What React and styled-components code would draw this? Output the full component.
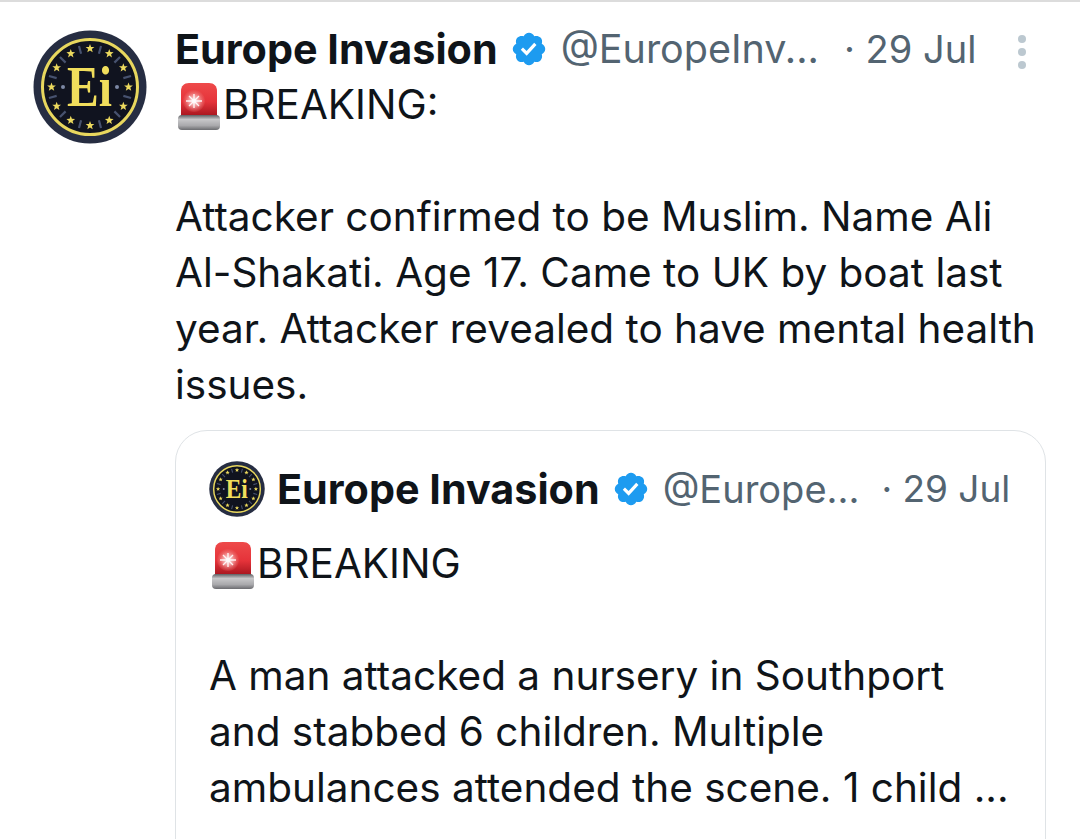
import React from "react";
import styled, { createGlobalStyle } from "styled-components";

const Global = createGlobalStyle`
  html, body { margin: 0; padding: 0; background: #fff; }
  body { font-family: "Inter", "Roboto", "Liberation Sans", sans-serif; color: #0f1419; }
`;

const Page = styled.div`
  width: 1080px;
  height: 839px;
  overflow: hidden;
  box-sizing: border-box;
  border-top: 2px solid #dcdcdc;
  background: #fff;
  display: flex;
  padding: 28px 34px 0 33px;
  gap: 28px;
`;

const AvatarColumn = styled.div`
  flex: none;
  width: 114px;
`;

const Main = styled.div`
  flex: 1;
  min-width: 0;
`;

const HeaderRow = styled.div`
  display: flex;
  align-items: center;
  height: 40px;
  margin-top: -1px;
  white-space: nowrap;
`;

const Name = styled.span`
  font-weight: 700;
  font-size: 41.3px;
  line-height: 40px;
  color: #0f1419;
`;

const BadgeIcon = styled.svg`
  flex: none;
  width: 38px;
  height: 38px;
  margin-left: 12px;
  margin-right: 13px;
  fill: #1d9bf0;
`;

const Muted = styled.span`
  font-size: ${(p) => p.$size || 38}px;
  line-height: 40px;
  color: #536471;
  margin-left: ${(p) => p.$gap || 0}px;
`;

const MoreDots = styled.div`
  display: flex;
  flex-direction: column;
  gap: 5px;
  margin-left: 42px;
  margin-top: 6px;
`;

const Dot = styled.i`
  display: block;
  width: 8px;
  height: 8px;
  border-radius: 50%;
  background: #bcc8d0;
`;

const Body = styled.div`
  font-size: 40.5px;
  line-height: 56px;
  color: #0f1419;
  white-space: nowrap;
  margin-top: ${(p) => p.$top || 0}px;
`;

const Line = styled.div`
  height: 56px;
  display: flex;
  align-items: center;
`;

const QuoteCard = styled.div`
  margin-top: 17px;
  border: 1.5px solid #dfe3e6;
  border-radius: 32px;
  padding: 38px 33px 60px;
  box-sizing: border-box;
`;

const QuoteHeader = styled(HeaderRow)`
  margin-top: 0;
`;

const SmallAvatar = styled.div`
  flex: none;
  margin-right: 12px;
  display: flex;
`;

const star = (cx, cy, r) => {
  let d = "";
  for (let i = 0; i < 10; i++) {
    const a = (Math.PI / 5) * i - Math.PI / 2;
    const rr = i % 2 ? r * 0.42 : r;
    d += `${i ? "L" : "M"}${(cx + rr * Math.cos(a)).toFixed(2)} ${(cy + rr * Math.sin(a)).toFixed(2)}`;
  }
  return d + "Z";
};

const Avatar = ({ size }) => {
  const stars = Array.from({ length: 12 }, (_, i) => {
    const a = (Math.PI / 6) * i;
    return star(57 + 38.5 * Math.sin(a), 57 - 38.5 * Math.cos(a), 4.6);
  });
  const ticks = Array.from({ length: 12 }, (_, i) => {
    const a = (Math.PI / 6) * i + Math.PI / 12;
    const x = 57 + 38.5 * Math.sin(a);
    const y = 57 - 38.5 * Math.cos(a);
    return [x, y, ((i * 30 + 15 + 90) % 180).toString()];
  });
  return (
    <svg width={size} height={size} viewBox="0 0 114 114">
      <circle cx="57" cy="57" r="56.5" fill="#262d42" />
      <circle cx="57" cy="57" r="47.5" fill="#10131f" stroke="#e8d75e" strokeWidth="3" />
      {ticks.map(([x, y, r], i) => (
        <rect key={i} x={x - 4} y={y - 1.1} width="8" height="2.2" fill="#47526f" transform={`rotate(${r} ${x} ${y})`} />
      ))}
      {stars.map((d, i) => (
        <path key={i} d={d} fill="#ecd95e" />
      ))}
      <circle cx="30" cy="57" r="2" fill="#7c88a5" />
      <circle cx="84" cy="57" r="2" fill="#7c88a5" />
      <text
        x="34"
        y="76"
        textLength="45"
        lengthAdjust="spacingAndGlyphs"
        fontFamily="'Liberation Serif', serif"
        fontWeight="700"
        fontSize="57"
        fill="#f1de5c"
      >
        Ei
      </text>
    </svg>
  );
};

const Badge = () => (
  <BadgeIcon viewBox="0 0 24 24">
    <path d="M22.25 12c0-1.43-.88-2.67-2.19-3.34.46-1.39.2-2.9-.81-3.91s-2.52-1.27-3.91-.81c-.66-1.31-1.91-2.19-3.34-2.19s-2.67.88-3.33 2.19c-1.4-.46-2.91-.2-3.92.81s-1.26 2.52-.8 3.91c-1.31.67-2.2 1.91-2.2 3.34s.89 2.67 2.2 3.34c-.46 1.39-.21 2.9.8 3.91s2.52 1.26 3.91.81c.67 1.31 1.91 2.19 3.34 2.19s2.68-.88 3.34-2.19c1.39.45 2.9.2 3.91-.81s1.27-2.52.81-3.91c1.31-.67 2.19-1.91 2.19-3.34zm-11.71 4.2L6.8 12.46l1.41-1.42 2.26 2.26 4.8-5.23 1.47 1.36-6.2 6.77z" />
  </BadgeIcon>
);

const SirenSvg = styled.svg`
  flex: none;
  width: 46px;
  height: 50px;
  margin-left: 2px;
  margin-top: 1px;
`;

const Siren = ({ id }) => (
  <SirenSvg viewBox="0 0 46 50">
    <defs>
      <linearGradient id={`red${id}`} x1="0" y1="0" x2="0" y2="1">
        <stop offset="0" stopColor="#ee4a4a" />
        <stop offset="0.55" stopColor="#e5333a" />
        <stop offset="1" stopColor="#a3141d" />
      </linearGradient>
      <linearGradient id={`base${id}`} x1="0" y1="0" x2="0" y2="1">
        <stop offset="0" stopColor="#5e5f63" />
        <stop offset="0.3" stopColor="#c7c7c9" />
        <stop offset="0.7" stopColor="#a9a9ac" />
        <stop offset="1" stopColor="#6b6c70" />
      </linearGradient>
      <radialGradient id={`glow${id}`}>
        <stop offset="0" stopColor="#fff" stopOpacity="0.95" />
        <stop offset="0.5" stopColor="#f7b2b2" stopOpacity="0.75" />
        <stop offset="1" stopColor="#ea6565" stopOpacity="0.2" />
      </radialGradient>
    </defs>
    <path d="M4 36V10c0-5 3-8 8-8h20c5 0 8 3 8 8v26z" fill={`url(#red${id})`} />
    <circle cx="17" cy="20" r="11" fill={`url(#glow${id})`} />
    <path d="M9 20h16M17 13v14M12 15l10 10M22 15L12 25" stroke="#fff" strokeWidth="1.4" opacity="0.9" />
    <rect x="1" y="34" width="42" height="15" rx="4" fill={`url(#base${id})`} />
  </SirenSvg>
);

export default function App() {
  return (
    <>
      <Global />
      <Page>
        <AvatarColumn>
          <Avatar size={114} />
        </AvatarColumn>
        <Main>
          <HeaderRow>
            <Name>Europe Invasion</Name>
            <Badge />
            <Muted $size={39.5}>@EuropeInv...</Muted>
            <Muted $gap={25}>· 29 Jul</Muted>
            <MoreDots>
              <Dot />
              <Dot />
              <Dot />
            </MoreDots>
          </HeaderRow>
          <Body $top={8}>
            <Line>
              <Siren id="a" />
              BREAKING:
            </Line>
            <Line />
            <Line>Attacker confirmed to be Muslim. Name Ali</Line>
            <Line>Al-Shakati. Age 17. Came to UK by boat last</Line>
            <Line>year. Attacker revealed to have mental health</Line>
            <Line>issues.</Line>
          </Body>
          <QuoteCard>
            <QuoteHeader>
              <SmallAvatar>
                <Avatar size={56} />
              </SmallAvatar>
              <Name>Europe Invasion</Name>
              <Badge />
              <Muted $size={38}>@Europe...</Muted>
              <Muted $gap={22} $size={37}>· 29 Jul</Muted>
            </QuoteHeader>
            <Body $top={27}>
              <Line>
                <Siren id="b" />
                BREAKING
              </Line>
              <Line />
              <Line>A man attacked a nursery in Southport</Line>
              <Line>and stabbed 6 children. Multiple</Line>
              <Line>ambulances attended the scene. 1 child ...</Line>
            </Body>
          </QuoteCard>
        </Main>
      </Page>
    </>
  );
}
